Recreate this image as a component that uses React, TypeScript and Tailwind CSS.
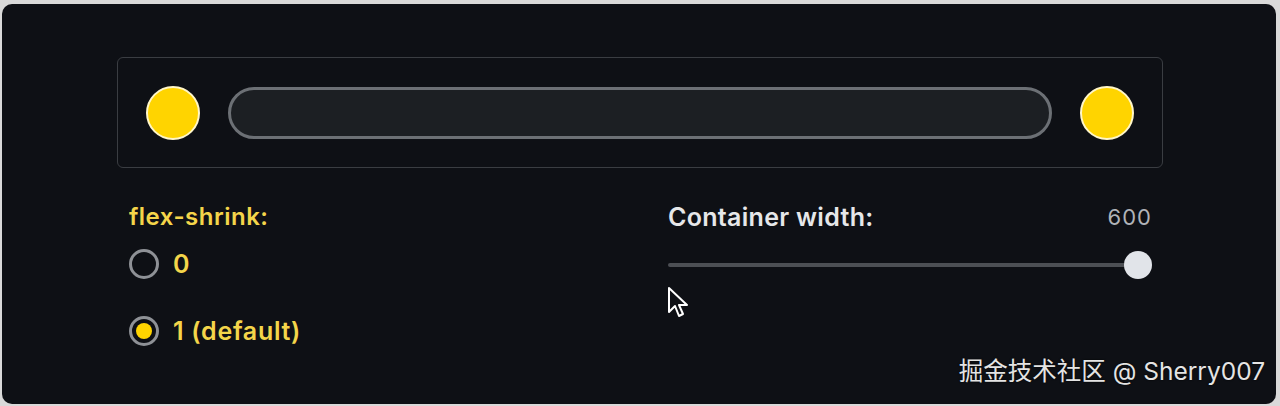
import React from "react";

const font = { fontFamily: "Inter, 'Noto Sans', 'Noto Sans CJK SC', sans-serif" };

function Ball() {
  return <div className="h-[54px] w-[54px] shrink-0 rounded-full border-2 border-[#fff6c8] bg-[#ffd400]" />;
}

function Radio({ label, checked }: { label: string; checked?: boolean }) {
  return (
    <label className="flex items-center gap-[14px]">
      <span className="flex h-[30px] w-[30px] items-center justify-center rounded-full border-[3px] border-[#8e9196]">
        {checked && <span className="h-[16px] w-[16px] rounded-full bg-[#ffd400]" />}
      </span>
      <span className="text-[25px] font-semibold leading-[30px] tracking-[0.7px] text-[#f4d54a]">{label}</span>
    </label>
  );
}

export default function App() {
  return (
    <div className="h-[406px] w-[1280px] bg-[#d9d9d9] pt-[4px] pl-[2px] pr-[4px] pb-[2px]" style={font}>
      <div className="relative h-full w-full rounded-[10px] bg-[#0e1015] pl-[115px] pr-[113px] pt-[53px]">
        {/* demo container */}
        <div className="flex h-[111px] items-center gap-[28px] rounded-[6px] border border-[#3a3d42] px-[28px]">
          <Ball />
          <div className="h-[52px] flex-1 rounded-full border-[3px] border-[#6c7075] bg-[#1c1f23]" />
          <Ball />
        </div>

        {/* controls */}
        <div className="flex pl-[12px] pr-[11px] pt-[36px]">
          <div className="flex flex-col">
            <div className="text-[24px] font-semibold leading-[26px] tracking-[0.5px] text-[#f4d54a]">flex-shrink:</div>
            <div className="mt-[19px] flex flex-col gap-[37px]">
              <Radio label="0" />
              <Radio label="1 (default)" checked />
            </div>
          </div>

          <div className="ml-auto w-[484px]">
            <div className="flex items-center justify-between leading-[26px]">
              <span className="text-[25px] font-semibold tracking-[0.3px] text-[#e6e7e9]">Container width:</span>
              <span className="text-[22px] tracking-[1px] text-[#b0b3b8]">600</span>
            </div>
            <div className="relative mt-[21px] flex h-[28px] items-center">
              <div className="h-[4px] w-full rounded-full bg-[#4c4f54]" />
              <div className="absolute right-0 h-[28px] w-[28px] rounded-full bg-[#e1e4e9]" />
            </div>
            <svg className="mt-[7px] -ml-[1px]" width="24" height="32" viewBox="0 0 24 32">
              <path d="M2 2 L2 26 L8 20 L12 30 L16 28 L12 19 L20 19 Z" fill="#0e1015" stroke="#ffffff" strokeWidth="2" strokeLinejoin="round" />
            </svg>
          </div>
        </div>

        <div className="absolute bottom-[14px] right-[11px] text-[24.5px] text-[#e4e4e4] [text-shadow:0_0_2px_#000]">
          掘金技术社区 @ Sherry007
        </div>
      </div>
    </div>
  );
}
